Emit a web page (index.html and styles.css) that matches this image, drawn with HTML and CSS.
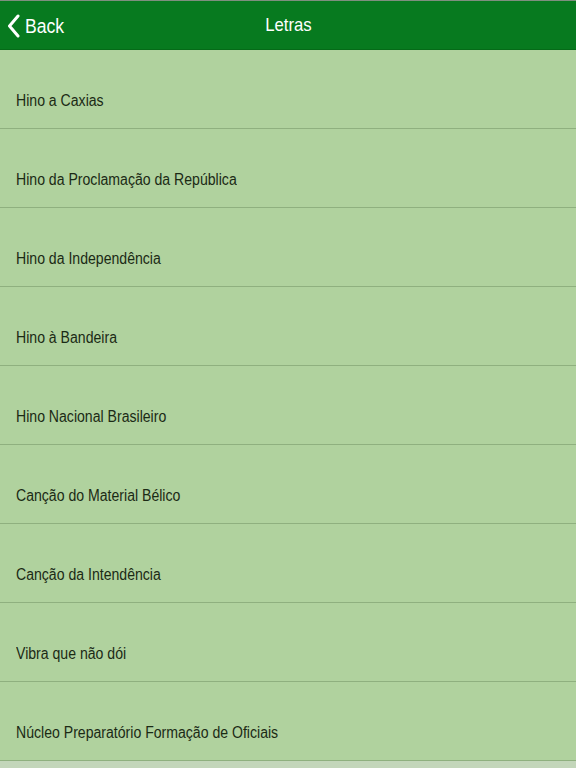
FILE: index.html
```html
<!DOCTYPE html>
<html lang="pt">
<head>
	<meta charset="UTF-8">
	<title>Letras</title>
	<link rel="stylesheet" href="styles.css">
</head>
<body>
	<div class="navbar">
		<a class="back" href="#">
			<svg width="14" height="24" viewBox="0 0 14 24"><path d="M11 2 L2.5 12 L11 22" fill="none" stroke="#fff" stroke-width="3" stroke-linecap="round" stroke-linejoin="round"/></svg>
			<span class="narrow">Back</span>
		</a>
		<div class="title"><span class="narrow">Letras</span></div>
	</div>
	<ul class="list">
		<li><span class="narrow">Hino a Caxias</span></li>
		<li><span class="narrow">Hino da Proclamação da República</span></li>
		<li><span class="narrow">Hino da Independência</span></li>
		<li><span class="narrow">Hino à Bandeira</span></li>
		<li><span class="narrow">Hino Nacional Brasileiro</span></li>
		<li><span class="narrow">Canção do Material Bélico</span></li>
		<li><span class="narrow">Canção da Intendência</span></li>
		<li><span class="narrow">Vibra que não dói</span></li>
		<li><span class="narrow">Núcleo Preparatório Formação de Oficiais</span></li>
	</ul>
</body>
</html>
```
FILE: styles.css
```css
*{margin:0;padding:0;}
body{
	background-color:#c3d6ba;
	font-family:"Liberation Sans",Arial,sans-serif;
}
.narrow{
	display:inline-block;
	transform:scaleX(0.88);
	transform-origin:left center;
}
.navbar{
	height:48px;
	border-top:1px solid #7f8f7f;
	border-bottom:1px solid #056a18;
	background-color:#077a1f;
	color:#fff;
	position:relative;
	display:flex;
	align-items:center;
	justify-content:center;
}
.back{
	position:absolute;
	left:7px;
	top:13px;
	display:flex;
	align-items:center;
	gap:4px;
	color:#fff;
	text-decoration:none;
	font-size:20px;
}
.title{
	font-size:19px;
}
.title .narrow{
	transform-origin:center center;
}
.list{
	list-style:none;
	background-color:#b0d29e;
}
.list li{
	height:37px;
	padding:41px 0 0 16px;
	border-bottom:1px solid #8fb07f;
	font-size:16px;
	line-height:20px;
	color:#1b2a15;
}
```
